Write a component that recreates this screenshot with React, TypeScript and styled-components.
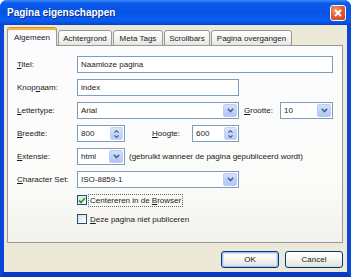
import React from "react";
import styled, { createGlobalStyle } from "styled-components";

const GlobalStyle = createGlobalStyle`
  html, body {
    margin: 0;
    padding: 0;
    background: #ffffff;
  }
  body {
    font-family: "Liberation Sans", Arial, sans-serif;
    font-size: 8px;
    color: #1a1a1a;
  }
`;

const Window = styled.div`
  width: 351px;
  height: 277px;
  display: flex;
  flex-direction: column;
  background: #0b46d6;
  border-radius: 7px 7px 0 0;
  overflow: hidden;
`;

const TitleBar = styled.div`
  height: 25px;
  flex: none;
  display: flex;
  align-items: center;
  justify-content: space-between;
  padding: 0 5px 0 7px;
  box-sizing: border-box;
  background: linear-gradient(
    180deg,
    #3d8dfb 0%,
    #0c5ceb 12%,
    #0653e6 45%,
    #0a5cf0 80%,
    #0552e0 92%,
    #0340c8 100%
  );
`;

const Title = styled.span`
  color: #fff;
  font-weight: bold;
  font-size: 10px;
  text-shadow: 1px 1px 0 #0b2f8c;
`;

const CloseButton = styled.div`
  width: 16px;
  height: 16px;
  box-sizing: border-box;
  border: 1px solid #fff;
  border-radius: 3px;
  background: radial-gradient(circle at 35% 30%, #f0a080 0%, #e2603a 45%, #c73a17 100%);
  display: flex;
  align-items: center;
  justify-content: center;
`;

const Frame = styled.div`
  flex: 1;
  display: flex;
  border-left: 4px solid #0a47d8;
  border-right: 5px solid #0a47d8;
  border-bottom: 5px solid #0638c4;
  box-shadow: inset 1px 0 0 #2a6cf0, inset -1px 0 0 #2a6cf0;
`;

const Body = styled.div`
  flex: 1;
  display: flex;
  flex-direction: column;
  background: #ece9d8;
  padding: 2px 4px 4px 3px;
`;

const TabStrip = styled.div`
  display: flex;
  align-items: flex-end;
  height: 19px;
  margin-bottom: -1px;
  position: relative;
  z-index: 1;
`;

const Tab = styled.div<{ $w: number; $active?: boolean }>`
  width: ${(p) => p.$w}px;
  height: ${(p) => (p.$active ? 19 : 16)}px;
  margin-right: 1px;
  box-sizing: border-box;
  display: flex;
  align-items: center;
  justify-content: center;
  border: 1px solid #919b9c;
  border-bottom: ${(p) => (p.$active ? "none" : "1px solid #919b9c")};
  border-radius: 3px 3px 0 0;
  background: ${(p) =>
    p.$active ? "#fcfcfe" : "linear-gradient(180deg, #ffffff 0%, #f3f3ef 60%, #e6e5de 100%)"};
  box-shadow: ${(p) => (p.$active ? "inset 0 2px 0 #f5b53f" : "none")};
  border-top-color: ${(p) => (p.$active ? "#e68b2c" : "#919b9c")};
  padding-top: ${(p) => (p.$active ? 0 : 1)}px;
  white-space: nowrap;
`;

const Panel = styled.div`
  height: 198px;
  box-sizing: border-box;
  border: 1px solid #919b9c;
  background: linear-gradient(180deg, #fcfcfe 0%, #fbfbf9 70%, #f3f2ec 100%);
  padding: 10px 9px 0 9px;
  display: flex;
  flex-direction: column;
`;

const FormGrid = styled.div`
  display: grid;
  grid-template-columns: 60px 1fr;
  grid-auto-rows: 17px;
  row-gap: 6px;
  align-items: center;
`;

const Label = styled.span<{ $w?: number; $ml?: number }>`
  white-space: nowrap;
  ${(p) => (p.$w ? `width: ${p.$w}px;` : "")}
  ${(p) => (p.$ml ? `margin-left: ${p.$ml}px;` : "")}
`;

const Key = styled.u`
  text-decoration: underline;
`;

const Line = styled.div<{ $gap?: number }>`
  display: flex;
  align-items: center;
  height: 17px;
  gap: ${(p) => p.$gap ?? 0}px;
`;

const Field = styled.div<{ $w: number }>`
  width: ${(p) => p.$w}px;
  height: 17px;
  box-sizing: border-box;
  border: 1px solid #7f9db9;
  background: #fff;
  display: flex;
  align-items: center;
  padding-left: 3px;
  flex: none;
`;

const FieldText = styled.span`
  flex: 1;
  white-space: nowrap;
  overflow: hidden;
`;

const DropButton = styled.div`
  width: 14px;
  height: 13px;
  margin-right: 1px;
  box-sizing: border-box;
  border: 1px solid #b9cdf7;
  border-radius: 2px;
  background: linear-gradient(180deg, #d5e1fd 0%, #c0d2fa 50%, #b1c6f5 100%);
  display: flex;
  align-items: center;
  justify-content: center;
`;

const SpinButton = styled.div`
  width: 13px;
  height: 13px;
  margin-right: 1px;
  box-sizing: border-box;
  border: 1px solid #c3d3fb;
  border-radius: 2px;
  background: linear-gradient(180deg, #dbe5fd 0%, #c6d6fb 50%, #b8cbf7 100%);
  display: flex;
  flex-direction: column;
  align-items: center;
  justify-content: center;
  gap: 2px;
`;

const Note = styled.span`
  white-space: nowrap;
`;

const CheckRow = styled.div<{ $top: number }>`
  display: flex;
  align-items: center;
  height: 14px;
  margin-top: ${(p) => p.$top}px;
  margin-left: 60px;
`;

const Box = styled.div`
  width: 10px;
  height: 10px;
  box-sizing: border-box;
  border: 1px solid #1c5180;
  background: linear-gradient(135deg, #dcdcd7 0%, #f4f4f1 60%, #ffffff 100%);
  display: flex;
  align-items: center;
  justify-content: center;
  flex: none;
  margin-right: 1px;
`;

const CheckLabel = styled.span<{ $focus?: boolean }>`
  padding: 1px 1px;
  border: 1px dotted ${(p) => (p.$focus ? "#666" : "transparent")};
  white-space: nowrap;
`;

const ButtonRow = styled.div`
  display: flex;
  justify-content: flex-end;
  gap: 6px;
  margin-top: 8px;
`;

const Button = styled.div<{ $default?: boolean }>`
  width: 58px;
  height: 17px;
  box-sizing: border-box;
  border: 1px solid #003c74;
  border-radius: 3px;
  background: linear-gradient(180deg, #ffffff 0%, #f4f4f0 50%, #e6e5de 90%, #d6d0c5 100%);
  box-shadow: ${(p) =>
    p.$default ? "inset 0 0 0 1px #a8bff0, inset 0 0 0 2px #cedcf7" : "none"};
  display: flex;
  align-items: center;
  justify-content: center;
`;

const Chevron = () => (
  <svg width="7" height="5" viewBox="0 0 7 5">
    <path d="M0.8 0.8 L3.5 3.6 L6.2 0.8" fill="none" stroke="#4d6185" strokeWidth="1.6" />
  </svg>
);

const SmallArrow = ({ up }: { up?: boolean }) => (
  <svg width="5" height="3" viewBox="0 0 5 3">
    <path
      d={up ? "M0.5 2.6 L2.5 0.6 L4.5 2.6" : "M0.5 0.4 L2.5 2.4 L4.5 0.4"}
      fill="none"
      stroke="#4d6185"
      strokeWidth="1.2"
    />
  </svg>
);

const Select = ({ w, value }: { w: number; value: string }) => (
  <Field $w={w}>
    <FieldText>{value}</FieldText>
    <DropButton>
      <Chevron />
    </DropButton>
  </Field>
);

const Spin = ({ w, value }: { w: number; value: string }) => (
  <Field $w={w}>
    <FieldText>{value}</FieldText>
    <SpinButton>
      <SmallArrow up />
      <SmallArrow />
    </SpinButton>
  </Field>
);

const tabs = [
  { label: "Algemeen", w: 50, active: true },
  { label: "Achtergrond", w: 54 },
  { label: "Meta Tags", w: 50 },
  { label: "Scrollbars", w: 46 },
  { label: "Pagina overgangen", w: 81 },
];

const App = () => (
  <>
    <GlobalStyle />
    <Window>
      <TitleBar>
        <Title>Pagina eigenschappen</Title>
        <CloseButton>
          <svg width="8" height="8" viewBox="0 0 8 8">
            <path d="M1 1 L7 7 M7 1 L1 7" stroke="#fff" strokeWidth="1.8" />
          </svg>
        </CloseButton>
      </TitleBar>
      <Frame>
        <Body>
          <TabStrip>
            {tabs.map((t) => (
              <Tab key={t.label} $w={t.w} $active={t.active}>
                {t.label}
              </Tab>
            ))}
          </TabStrip>
          <Panel>
            <FormGrid>
              <Label>
                <Key>T</Key>itel:
              </Label>
              <Field $w={256}>
                <FieldText>Naamloze pagina</FieldText>
              </Field>

              <Label>
                Knop<Key>n</Key>aam:
              </Label>
              <Field $w={162}>
                <FieldText>index</FieldText>
              </Field>

              <Label>
                <Key>L</Key>ettertype:
              </Label>
              <Line $gap={5}>
                <Select w={162} value="Arial" />
                <Label $w={31}>
                  <Key>G</Key>rootte:
                </Label>
                <Select w={53} value="10" />
              </Line>

              <Label>
                <Key>B</Key>reedte:
              </Label>
              <Line>
                <Spin w={48} value="800" />
                <Label $ml={27} $w={40}>
                  <Key>H</Key>oogte:
                </Label>
                <Spin w={47} value="600" />
              </Line>

              <Label>
                <Key>E</Key>xtensie:
              </Label>
              <Line $gap={4}>
                <Select w={48} value="html" />
                <Note>(gebruikt wanneer de pagina gepubliceerd wordt)</Note>
              </Line>

              <Label>
                <Key>C</Key>haracter Set:
              </Label>
              <Select w={162} value="ISO-8859-1" />
            </FormGrid>

            <CheckRow $top={5}>
              <Box>
                <svg width="8" height="7" viewBox="0 0 8 7">
                  <path d="M1 3.5 L3 5.5 L7 1" fill="none" stroke="#21a121" strokeWidth="1.8" />
                </svg>
              </Box>
              <CheckLabel $focus>
                Centereren in de <Key>B</Key>rowser
              </CheckLabel>
            </CheckRow>
            <CheckRow $top={5}>
              <Box />
              <CheckLabel>
                <Key>D</Key>eze pagina niet publiceren
              </CheckLabel>
            </CheckRow>
          </Panel>
          <ButtonRow>
            <Button $default>OK</Button>
            <Button>Cancel</Button>
          </ButtonRow>
        </Body>
      </Frame>
    </Window>
  </>
);

export default App;
